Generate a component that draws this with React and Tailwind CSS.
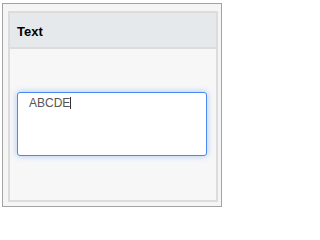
export default function App() {
  return (
    <div className="w-[226px] h-[210px] bg-white pt-[3px] pl-[2px] font-['Liberation_Sans',Arial,sans-serif]">
      <div className="w-[220px] h-[204px] border border-[#a3a3a3] bg-[#f5f5f5] pt-[7px] pl-[5px]">
        {/* panel */}
        <div className="w-[210px] h-[191px] border-2 border-[#dcdcdc] flex flex-col bg-[#f7f7f7]">
          <div className="h-[36px] shrink-0 bg-[#e6e9ec] border-b-2 border-[#dcdcdc] flex items-center pl-[7px] pt-[2px]">
            <span className="text-[13px] font-bold text-black leading-none">Text</span>
          </div>
          <div className="flex-1 pt-[43px] pl-[7px]">
            <div className="w-[190px] h-[64px] bg-white border border-[#4a8af4] rounded-[3px] shadow-[0_0_6px_rgba(74,138,244,0.45)] pl-[11px] pt-[3px]">
              <div className="flex items-center text-[12px] leading-[14px] text-[#555]">
                <span>ABCDE</span>
                <span className="inline-block w-px h-[12px] bg-[#333]" />
              </div>
            </div>
          </div>
        </div>
      </div>
    </div>
  );
}
